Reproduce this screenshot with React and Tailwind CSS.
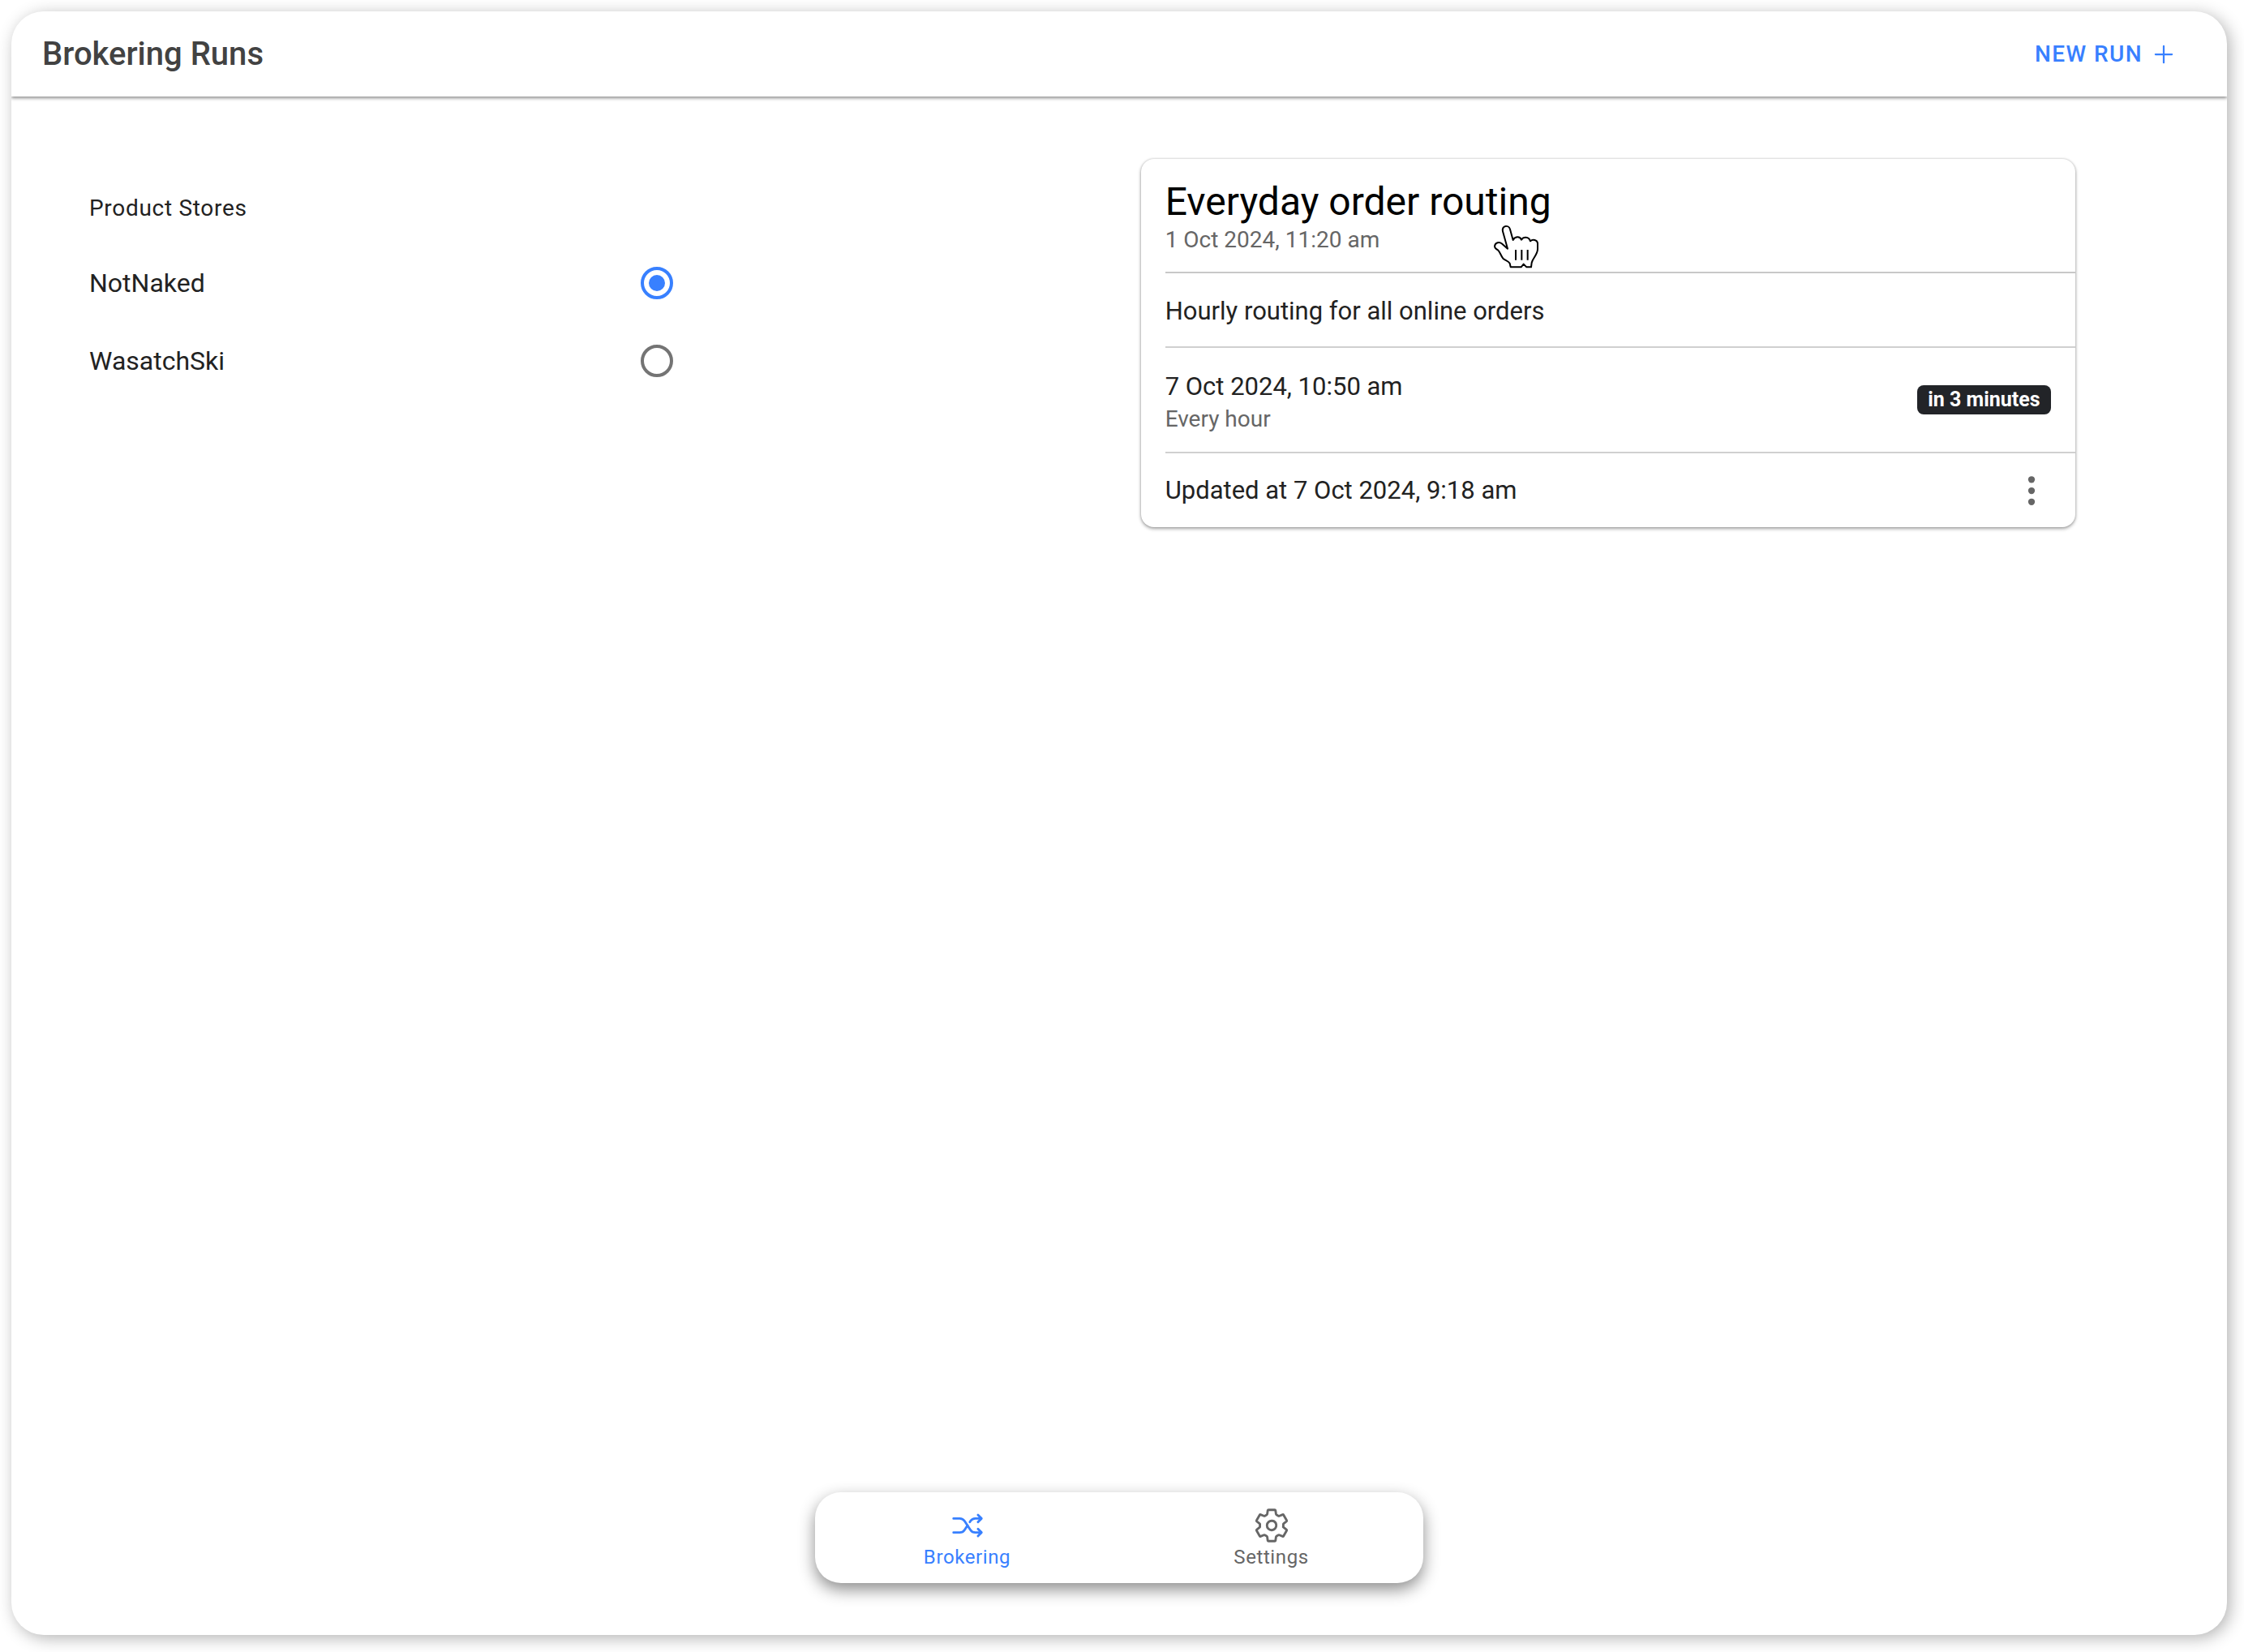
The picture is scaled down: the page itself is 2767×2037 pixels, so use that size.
import { useState } from "react";
import { IoShuffle, IoSettingsOutline, IoAddOutline, IoEllipsisVertical } from "react-icons/io5";

const stores = ["NotNaked", "WasatchSki"];

function PointerHand() {
  return (
    <svg viewBox="0 0 240 210" className="absolute top-[74px] left-[424px] h-[70px] w-20" aria-hidden="true">
      <path
        d="M84 110L66 46C62 24 88 20 93 38L104 78C110 65 129 62 135 77C142 65 162 64 168 82C176 74 194 76 195 90V112C195 132 176 146 173 162L171 178H154L143 167L134 178H95L92 164C86 154 76 154 67 146C58 134 58 126 49 116C40 110 36 108 36 101C38 86 54 84 62 91Z"
        fill="#fff"
        stroke="#000"
        strokeWidth="6"
        strokeLinejoin="round"
      />
      <path d="M114 114V152M136 114V152M158 114V152" stroke="#000" strokeWidth="6" fill="none" />
    </svg>
  );
}

function StoreRadio({ name, checked, onChange }) {
  return (
    <label className="flex h-24 items-center justify-between text-[32px] leading-10">
      {name}
      <input
        type="radio"
        name="store"
        checked={checked}
        onChange={onChange}
        className="h-10 w-10 appearance-none rounded-full border-4 border-[#747474] bg-white checked:border-[#3880ff] checked:bg-[#3880ff] checked:bg-clip-content checked:p-1.5"
      />
    </label>
  );
}

export default function App() {
  const [store, setStore] = useState("NotNaked");
  return (
    <div className="flex min-h-screen bg-white pt-3.5 pr-[21px] pb-[21px] pl-3.5 font-[Roboto,sans-serif] text-[#222]">
      <div className="flex grow flex-col overflow-hidden rounded-[40px] bg-white shadow-[4px_4px_20px_rgba(0,0,0,0.3)]">
        <header className="flex h-[105px] items-center justify-between pr-[60px] pl-[38px] shadow-[0_2px_4px_rgba(0,0,0,0.45)]">
          <h1 className="text-[40px] font-medium text-[#424242]">Brokering Runs</h1>
          <button type="button" className="flex items-center gap-2 text-[28px] font-medium tracking-wider text-[#3880ff]">
            NEW RUN
            <IoAddOutline className="h-9 w-9" />
          </button>
        </header>
        <main className="grid grid-cols-[15fr_19fr] items-start">
          <fieldset className="mt-[108px] ml-24 w-[720px]">
            <legend className="mb-3.5 text-[28px] leading-[60px] tracking-wide">Product Stores</legend>
            {stores.map((name) => (
              <StoreRadio key={name} name={name} checked={store === name} onChange={() => setStore(name)} />
            ))}
          </fieldset>
          <article className="relative mx-auto mt-[77px] w-full max-w-6xl rounded-2xl bg-white pl-[30px] text-[31px] leading-9 shadow-[0_2px_4px_rgba(0,0,0,0.35),0_0_3px_rgba(0,0,0,0.2)]">
            <div className="h-[141px] border-b-2 border-[#c8c8c8] pt-6">
              <h2 className="text-[48px] leading-[58px] text-black">Everyday order routing</h2>
              <p className="text-[28px] leading-9 text-[#666]">1 Oct 2024, 11:20 am</p>
            </div>
            <p className="flex h-[92px] items-center border-b-2 border-[#d0d0d0] pt-1">Hourly routing for all online orders</p>
            <div className="flex h-[130px] items-center justify-between border-b-2 border-[#d0d0d0] pr-[30px]">
              <div className="pt-2">
                <p className="leading-10">7 Oct 2024, 10:50 am</p>
                <p className="text-[28px] leading-10 text-[#666]">Every hour</p>
              </div>
              <span className="rounded-lg bg-[#222428] px-[13px] text-[25px] leading-9 font-bold text-white">in 3 minutes</span>
            </div>
            <div className="flex h-[91px] items-center justify-between pr-8">
              <p>Updated at 7 Oct 2024, 9:18 am</p>
              <button type="button" aria-label="More actions">
                <IoEllipsisVertical className="h-11 w-11 text-[#666]" />
              </button>
            </div>
            <PointerHand />
          </article>
        </main>
        <nav className="mx-auto mt-auto mb-16 grid h-28 w-[750px] grid-cols-2 rounded-[32px] bg-white text-[24px] leading-7 tracking-wide text-[#666] shadow-[0_8px_20px_rgba(0,0,0,0.45)]">
          <a href="#brokering" className="flex flex-col items-center justify-center gap-0.5 text-[#3880ff]">
            <IoShuffle className="h-[46px] w-[46px]" />
            Brokering
          </a>
          <a href="#settings" className="flex flex-col items-center justify-center gap-0.5">
            <IoSettingsOutline className="h-[46px] w-[46px]" />
            Settings
          </a>
        </nav>
      </div>
    </div>
  );
}
